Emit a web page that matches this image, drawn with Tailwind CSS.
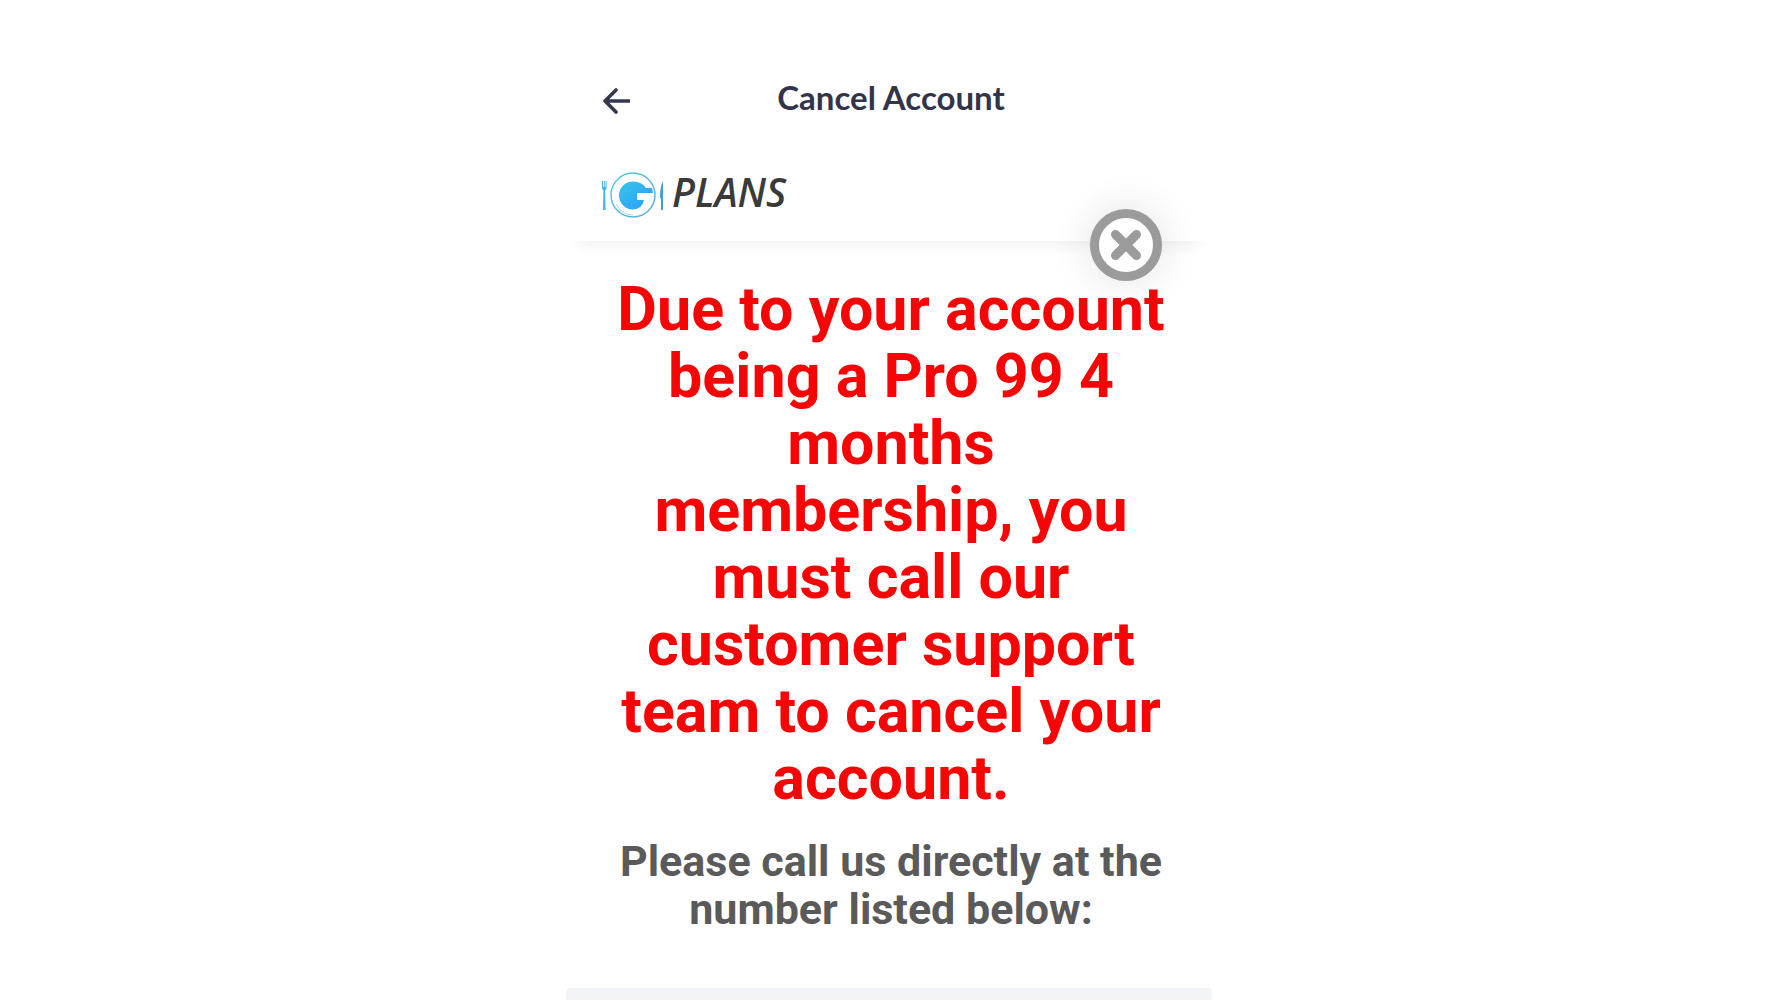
<!DOCTYPE html>
<html lang="en">
<head>
<meta charset="utf-8">
<meta name="viewport" content="width=device-width, initial-scale=1">
<title>Cancel Account</title>
<script src="https://cdn.jsdelivr.net/npm/@tailwindcss/browser@4"></script>
</head>
<body class="bg-white">
<div class="mx-auto flex min-h-screen max-w-[646px] flex-col font-['Roboto',sans-serif]">
  <header class="relative pt-[75px] shadow-[0_16px_14px_-12px_rgba(0,0,0,0.06)]">
    <div class="grid grid-cols-[48px_1fr_44px] items-center px-7">
      <button type="button" aria-label="Back" class="flex h-11 w-12 items-center justify-start pt-2 pl-2">
        <svg class="h-7 w-7" viewBox="0 0 28 28" fill="none" stroke="#35384c" stroke-width="3.6" stroke-linecap="round" stroke-linejoin="round"><path d="M27 14H3M14 3 3 14l11 11"/></svg>
      </button>
      <h1 class="text-center font-['Lato',sans-serif] text-[33px] leading-[42px] font-bold text-[#32354a]">Cancel Account</h1>
    </div>
    <a href="#" class="mt-12 flex h-[74px] items-start gap-2 pl-9">
      <svg class="h-[52px] w-[62px] shrink-0" viewBox="0 0 62 52" aria-hidden="true">
        <defs>
          <linearGradient id="g" x1="0" y1="0" x2="1" y2="1"><stop offset="0" stop-color="#35c6ea"/><stop offset="1" stop-color="#2a9cf8"/></linearGradient>
          <linearGradient id="r" x1="0" y1="0" x2="1" y2="1"><stop offset="0" stop-color="#4ccbd8"/><stop offset="1" stop-color="#5aa9dc"/></linearGradient>
        </defs>
        <path d="M0 14v6q0 3 1.400 3.500L1 43h2.600L3.200 23.500Q4.600 23 4.600 20v-6H3.600v6H2.800v-6H1.800v6H1v-6z" fill="#3fb9dc"/>
        <circle cx="31" cy="28" r="22" fill="none" stroke="url(#r)" stroke-width="1.400"/>
        <path d="M14 37a18.500 18.500 0 0 0 17 11" fill="none" stroke="#a9dbe8" stroke-width="1"/>
        <path d="M31 14.500A14 14 0 1 0 31 42.500Q40 42 42 33H35v-7h16l-1-5h-6Q40 14.500 31 14.500z" fill="url(#g)"/>
        <path d="M61 14v29h-2V31h-1q0-12 3-17z" fill="#3b9fd8"/>
      </svg>
      <span class="font-['Open_Sans',sans-serif] text-[39px] leading-[50px] font-semibold text-[#3a3a3a] italic">PLANS</span>
    </a>
    <button type="button" aria-label="Close" class="absolute right-[50px] -bottom-10 flex h-[72px] w-[72px] items-center justify-center rounded-full border-[9px] border-[#9b9b9b] bg-white shadow-[0_0_40px_rgba(0,0,0,0.12)]">
      <svg class="h-8 w-8" viewBox="0 0 32 32" stroke="#9b9b9b" stroke-width="9" stroke-linecap="round"><path d="M5.500 5.500l21 21M26.500 5.500l-21 21"/></svg>
    </button>
  </header>
  <main class="flex-1 pr-11 pl-12 pt-[35px] text-center">
    <h2 class="text-[61px] leading-[67px] font-bold text-[#f50505]">Due to your account being a Pro 99 4 months membership, you must call our customer support team to cancel your account.</h2>
    <p class="mt-[25px] text-[43px] leading-12 font-bold text-[#5a5a5a]">Please call us directly at the number listed below:</p>
  </main>
  <footer class="h-3 rounded-t-sm bg-[#f3f4f7]"></footer>
</div>
</body>
</html>
